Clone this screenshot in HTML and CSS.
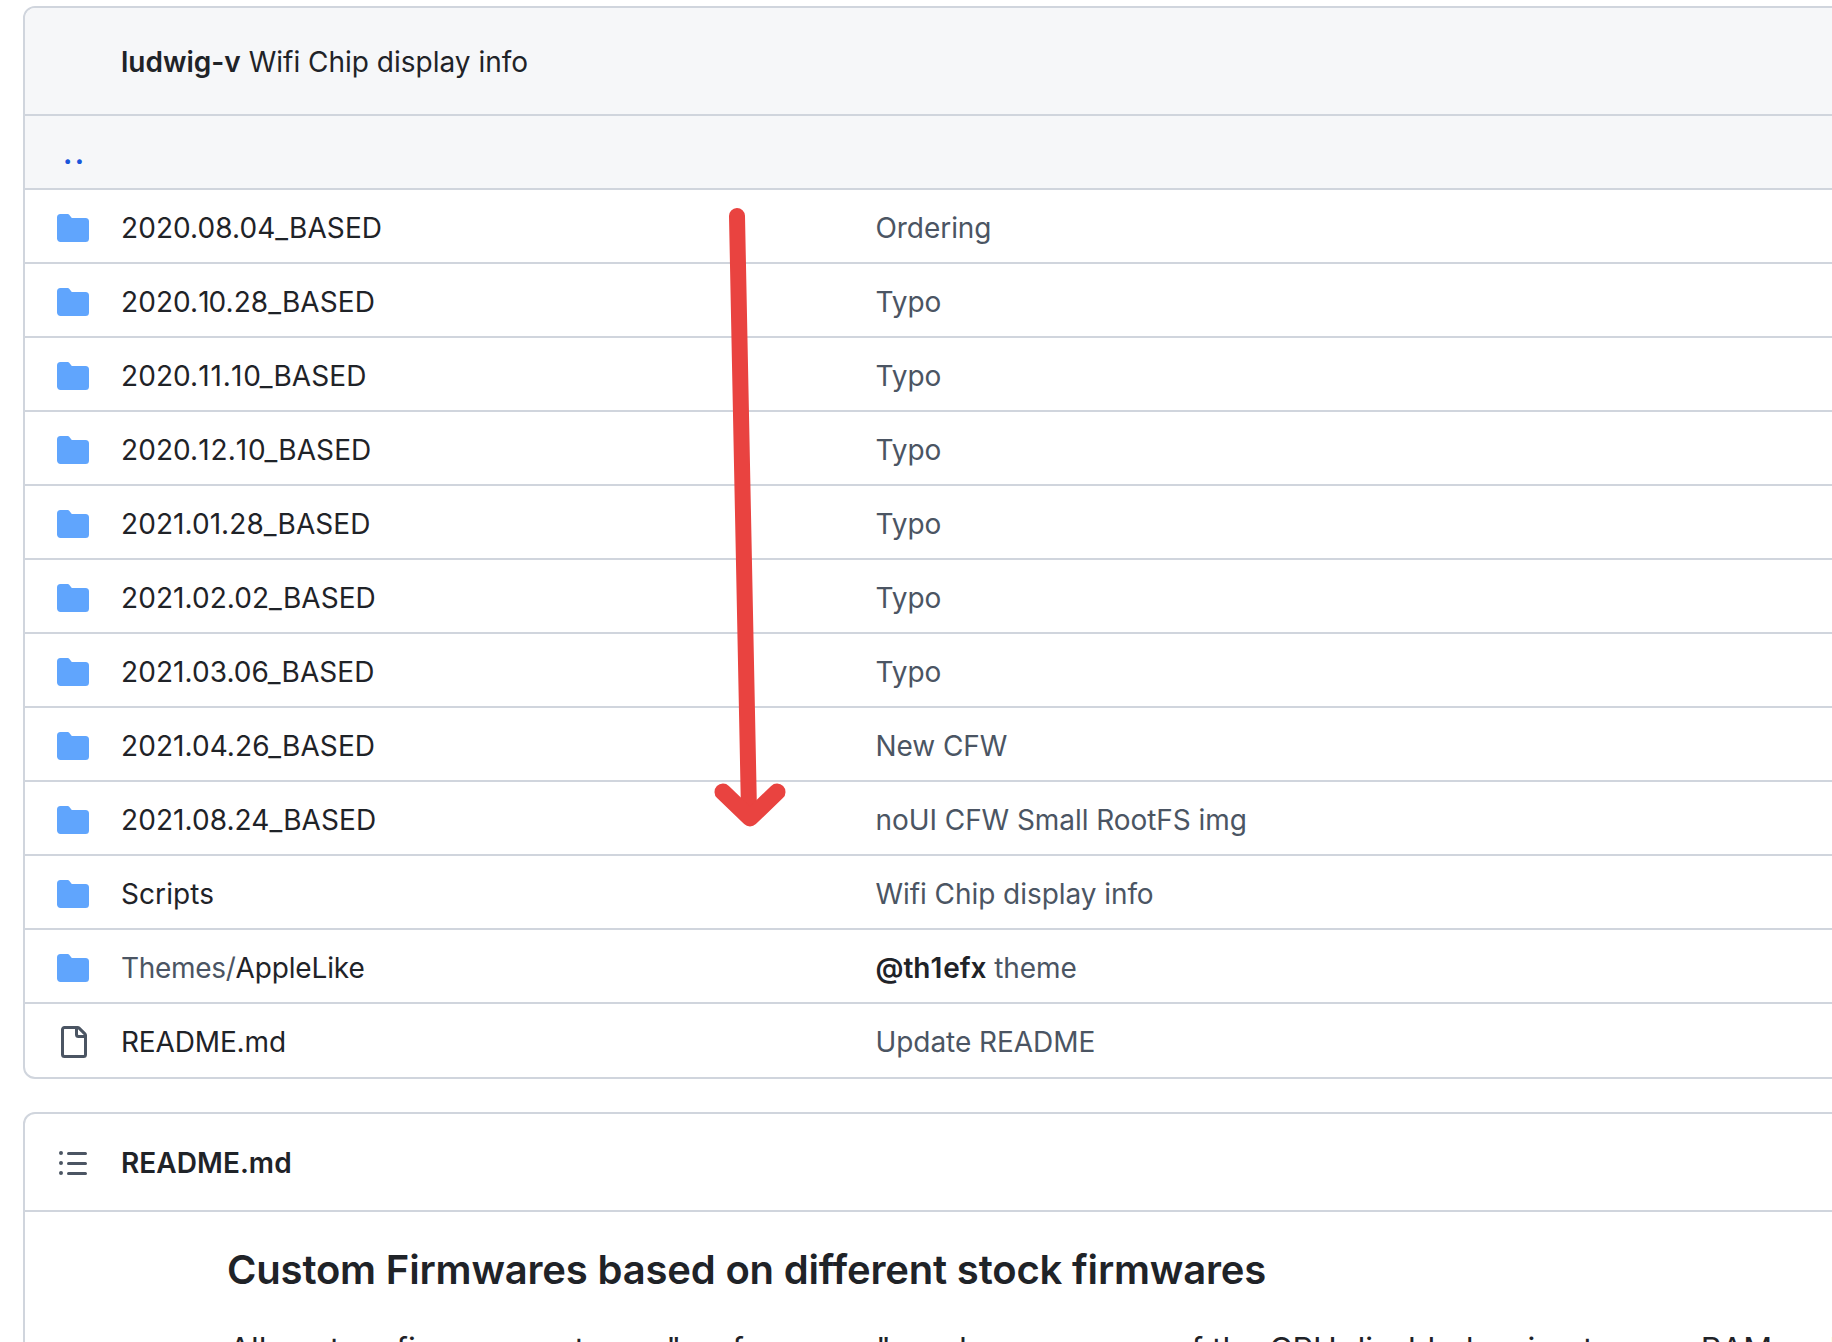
FILE: index.html
```html
<!DOCTYPE html>
<html lang="en">
<head>
<meta charset="utf-8">
<title>Custom Firmwares</title>
<link rel="stylesheet" href="styles.css">
</head>
<body>
<svg class="sprite" width="0" height="0" aria-hidden="true">
  <symbol id="folder" viewBox="0 0 16 16"><path d="M1.75 1A1.75 1.75 0 0 0 0 2.75v10.5C0 14.216.784 15 1.75 15h12.5A1.75 1.75 0 0 0 16 13.25v-8.5A1.75 1.75 0 0 0 14.25 3H7.5a.25.25 0 0 1-.2-.1l-.9-1.2C6.07 1.26 5.55 1 5 1H1.75Z"/></symbol>
  <symbol id="file" viewBox="0 0 16 16"><path d="M2 1.75C2 .784 2.784 0 3.75 0h6.586c.464 0 .909.184 1.237.513l2.914 2.914c.329.328.513.773.513 1.237v9.586A1.75 1.75 0 0 1 13.25 16h-9.5A1.75 1.75 0 0 1 2 14.25Zm1.75-.25a.25.25 0 0 0-.25.25v12.5c0 .138.112.25.25.25h9.5a.25.25 0 0 0 .25-.25V6h-2.75A1.75 1.75 0 0 1 9 4.25V1.5Zm6.75.062V4.25c0 .138.112.25.25.25h2.688l-.011-.013-2.914-2.914-.013-.011Z"/></symbol>
</svg>
<main class="page">
  <section class="box files">
    <header class="commit"><span><b>ludwig-v</b> Wifi Chip display info</span></header>
    <div class="up"><a class="up-link" href="#">..</a></div>
    <div class="row"><svg class="ico folder"><use href="#folder"/></svg><span class="name">2020.08.04_BASED</span><span class="msg">Ordering</span></div>
    <div class="row"><svg class="ico folder"><use href="#folder"/></svg><span class="name">2020.<i class="d1 snug">1</i>0.28_BASED</span><span class="msg">Typo</span></div>
    <div class="row"><svg class="ico folder"><use href="#folder"/></svg><span class="name">2020.<i class="d1">1</i><i class="d1">1</i>.<i class="d1">1</i>0_BASED</span><span class="msg">Typo</span></div>
    <div class="row"><svg class="ico folder"><use href="#folder"/></svg><span class="name">2020.<i class="d1">1</i>2.<i class="d1">1</i>0_BASED</span><span class="msg">Typo</span></div>
    <div class="row"><svg class="ico folder"><use href="#folder"/></svg><span class="name">2021.01.28_BASED</span><span class="msg">Typo</span></div>
    <div class="row"><svg class="ico folder"><use href="#folder"/></svg><span class="name">2021.02.02_BASED</span><span class="msg">Typo</span></div>
    <div class="row"><svg class="ico folder"><use href="#folder"/></svg><span class="name">2021.03.06_BASED</span><span class="msg">Typo</span></div>
    <div class="row"><svg class="ico folder"><use href="#folder"/></svg><span class="name">2021.04.26_BASED</span><span class="msg">New CFW</span></div>
    <div class="row"><svg class="ico folder"><use href="#folder"/></svg><span class="name">2021.08.24_BASED</span><span class="msg">noUI CFW Small RootFS img</span></div>
    <div class="row"><svg class="ico folder"><use href="#folder"/></svg><span class="name">Scripts</span><span class="msg">Wifi Chip display info</span></div>
    <div class="row"><svg class="ico folder"><use href="#folder"/></svg><span class="name tight"><span class="dim">Themes/</span>AppleLike</span><span class="msg"><b class="user">@th<i class="d1">1</i>efx</b> theme</span></div>
    <div class="row"><svg class="ico file"><use href="#file"/></svg><span class="name tight">README.md</span><span class="msg">Update README</span></div>
  </section>
  <section class="box readme">
    <header class="readme-head">
      <svg class="list" viewBox="0 0 16 16"><path d="M5.75 2.5h8.5a.75.75 0 0 1 0 1.5h-8.5a.75.75 0 0 1 0-1.5Zm0 5h8.5a.75.75 0 0 1 0 1.5h-8.5a.75.75 0 0 1 0-1.5Zm0 5h8.5a.75.75 0 0 1 0 1.5h-8.5a.75.75 0 0 1 0-1.5ZM2 14a1 1 0 1 1 0-2 1 1 0 0 1 0 2Zm1-6a1 1 0 1 1-2 0 1 1 0 0 1 2 0ZM2 4a1 1 0 1 1 0-2 1 1 0 0 1 0 2Z"/></svg>
      <b>README.md</b>
    </header>
    <article class="body">
      <h3>Custom Firmwares based on different stock firmwares</h3>
      <p>All custom firmwares at max "performance" mode, some core of the CPU disabled, using to save RAM and</p>
    </article>
  </section>
</main>
<svg class="arrow" viewBox="0 0 1832 1342" aria-hidden="true">
  <path d="M737 216 L749 812" />
  <path class="head" d="M723 792 L750 818 L777 792" />
</svg>
</body>
</html>
```
FILE: styles.css
```css
* { box-sizing: border-box; }
html, body { margin: 0; height: 1342px; overflow: hidden; background: #fff; }
body { font-family: Inter, "Liberation Sans", sans-serif; font-size: 28px; color: #1f2328; position: relative; }
.sprite { position: absolute; }
.page { padding: 6px 0 0 23px; width: 1900px; }
.box { border: 2px solid #d0d5dd; border-radius: 12px; }
.files { height: 1073px; overflow: hidden; }
.commit { height: 108px; background: #f6f7f9; border-bottom: 2px solid #d0d5dd; padding: 2px 0 0 96px; display: flex; align-items: center; white-space: pre; }
.commit b { font-weight: 600; }
.up { height: 74px; background: #f6f7f9; border-bottom: 2px solid #d0d5dd; padding: 21px 0 0 38px; }
.up-link { color: #1a56db; text-decoration: none; font-size: 28px; font-weight: 700; line-height: 34px; letter-spacing: 2.4px; }
.row { height: 74px; border-bottom: 2px solid #d0d5dd; padding-top: 4px; display: flex; align-items: center; }
.row:last-child { border-bottom: 0; padding-top: 2px; }
.ico { width: 32px; height: 32px; margin-left: 32px; flex: none; }
.folder { fill: #60a5fd; }
.file { fill: #4b5563; }
.name { width: 754.5px; margin-left: 32px; flex: none; letter-spacing: 0.07px; }
.name.tight { letter-spacing: -0.15px; }
.d1 { font-style: normal; letter-spacing: 0.9px; }
.d1.snug { letter-spacing: -1.1px; }
.dim { color: #4b5563; letter-spacing: -0.3px; }
.msg { color: #4b5563; letter-spacing: -0.06px; }
.user { color: #1f2328; font-weight: 600; }
.readme { margin-top: 33px; height: 400px; }
.readme-head { height: 98px; border-bottom: 2px solid #d0d5dd; display: flex; align-items: center; padding: 2px 0 0 32px; gap: 32px; }
.readme-head b { font-weight: 600; letter-spacing: 0.05px; }
.list { width: 32px; height: 32px; fill: #4b5563; flex: none; }
.body { padding: 33px 0 0 204px; }
h3 { margin: 0 0 31px -2px; font-size: 40px; font-weight: 600; line-height: 50px; letter-spacing: -0.18px; }
p { margin: 0; font-size: 32px; line-height: 48px; white-space: nowrap; }
.arrow { position: absolute; left: 0; top: 0; width: 1832px; height: 1342px; pointer-events: none; fill: none; stroke: #e94340; stroke-width: 16px; stroke-linecap: round; stroke-linejoin: round; }
.arrow .head { stroke-width: 17px; }
```
